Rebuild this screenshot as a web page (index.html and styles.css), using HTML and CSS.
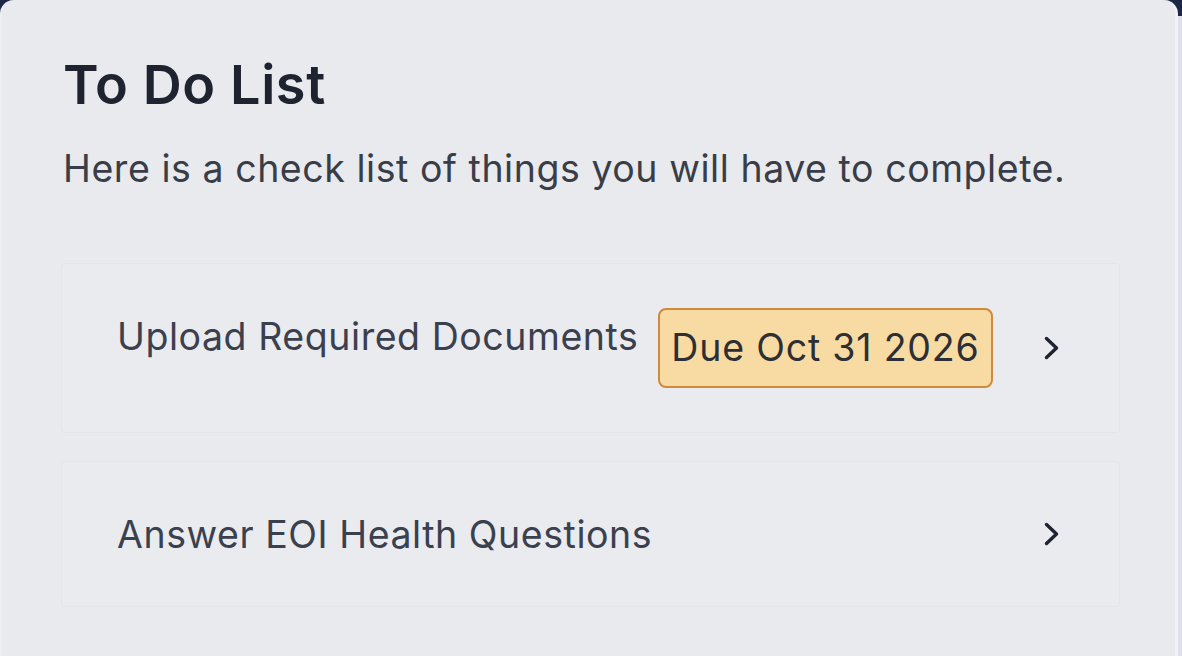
FILE: index.html
```html
<!DOCTYPE html>
<html lang="en">
<head>
<meta charset="utf-8">
<title>To Do List</title>
<link rel="stylesheet" href="styles.css">
</head>
<body>
<main class="card">
  <h1 class="title">To Do List</h1>
  <p class="subtitle">Here is a check list of things you will have to complete.</p>
  <ul class="todo-list">
    <li class="todo-item">
      <div class="todo-main">
        <span class="todo-label">Upload Required Documents</span>
        <span class="badge">Due Oct 31 2026</span>
      </div>
      <svg class="chevron" viewBox="0 0 30 30" aria-hidden="true"><path d="M9.5 5.5L19.5 15L9.5 24.5"/></svg>
    </li>
    <li class="todo-item">
      <div class="todo-main">
        <span class="todo-label">Answer EOI Health Questions</span>
      </div>
      <svg class="chevron" viewBox="0 0 30 30" aria-hidden="true"><path d="M9.5 5.5L19.5 15L9.5 24.5"/></svg>
    </li>
  </ul>
</main>
</body>
</html>
```
FILE: styles.css
```css
* { box-sizing: border-box; }
html, body { margin: 0; height: 100%; }
body {
  background: linear-gradient(#1c2747 0, #1c2747 16px, #dfe0eb 16px);
  font-family: Inter, "Noto Sans", sans-serif;
  overflow: hidden;
}
.card {
  width: 1178px;
  height: 680px;
  background: #e9eaed;
  border-radius: 14px;
  border-left: 2px solid #eeeff2;
  border-right: 3px solid #f1f1f6;
  padding: 54px 62px 0 61px;
}
.title {
  margin: 0;
  font-size: 54px;
  line-height: 62px;
  font-weight: 600;
  color: #1f2330;
  letter-spacing: 0.6px;
}
.subtitle {
  margin: 31px 0 0 0;
  font-size: 37.5px;
  line-height: 44px;
  color: #393d48;
  letter-spacing: 0.55px;
}
.todo-list {
  list-style: none;
  margin: 72px 0 0 -2px;
  padding: 0;
  width: 1059px;
  display: flex;
  flex-direction: column;
  gap: 28px;
}
.todo-item {
  display: flex;
  align-items: center;
  justify-content: space-between;
  border: 1px solid #e4e5e8;
  background: #eaebee;
  border-radius: 4px;
  padding: 44px 52px 44px 55px;
}
.todo-main {
  display: flex;
  align-items: flex-start;
  gap: 20px;
}
.todo-label {
  font-size: 37.5px;
  line-height: 54px;
  color: #3b404e;
  letter-spacing: 0.55px;
  margin-top: 2px;
}
.badge {
  font-size: 37.5px;
  line-height: 54px;
  color: #2d2f35;
  background: #f7dba3;
  border: 2px solid #d18a3d;
  border-radius: 8px;
  padding: 11px 11px;
  letter-spacing: 0.8px;
}
.chevron {
  width: 30px;
  height: 30px;
  fill: none;
  stroke: #1f2330;
  stroke-width: 3.4;
  stroke-linecap: round;
  stroke-linejoin: round;
}
```
